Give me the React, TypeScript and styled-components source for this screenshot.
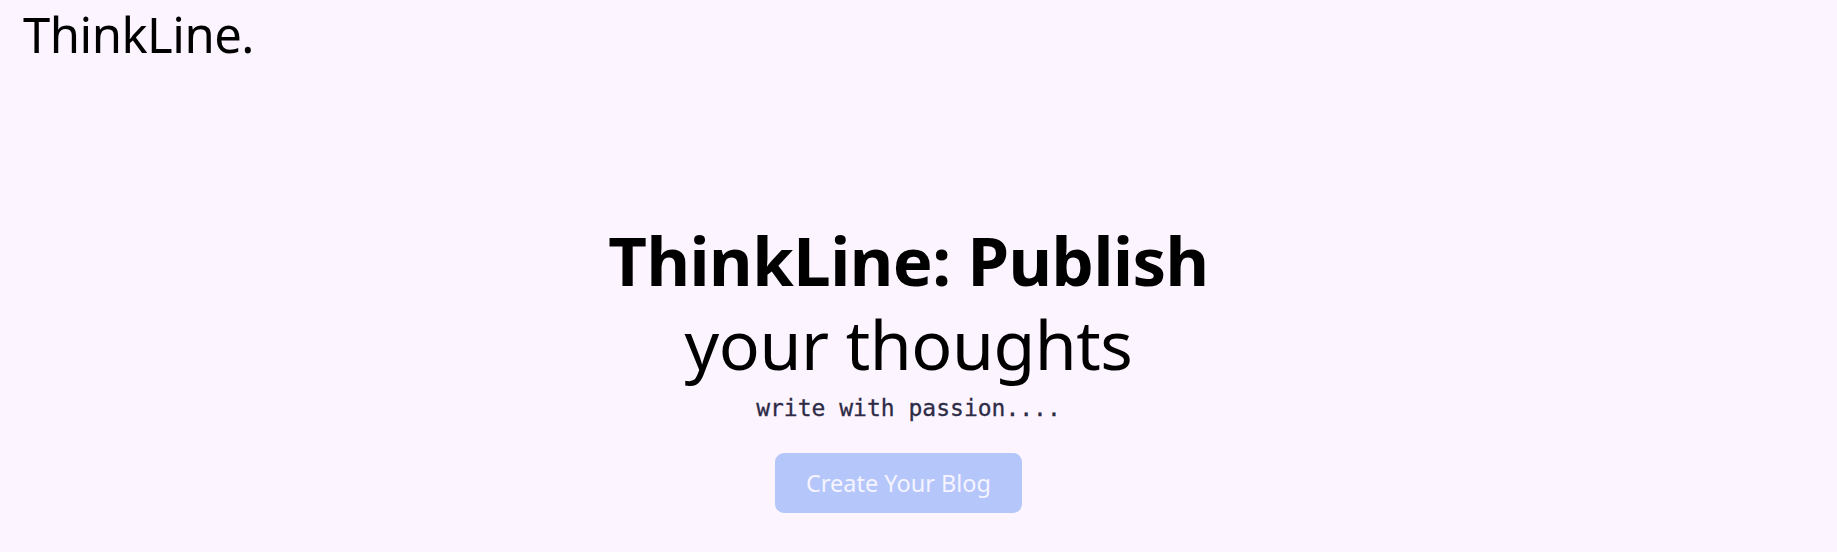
import React from "react";
import styled, { createGlobalStyle } from "styled-components";

const Global = createGlobalStyle`
  html, body { margin: 0; padding: 0; background: #fcf4ff; }
  body { font-family: "Noto Sans", "Open Sans", sans-serif; color: #000; }
`;

const Page = styled.div`
  width: 100%;
  height: 552px;
  display: flex;
  flex-direction: column;
  background: #fcf4ff;
  overflow: hidden;
`;

const Header = styled.header`
  display: flex;
  align-items: center;
  padding: 0 23px;
  height: 70px;
`;

const Logo = styled.div`
  font-size: 49px;
  line-height: 1;
  letter-spacing: -0.5px;
  margin-top: -2px;
`;

const Hero = styled.main`
  display: flex;
  flex-direction: column;
  align-items: center;
  padding-top: 146px;
  padding-right: 20px;
`;

const Title = styled.h1`
  margin: 0;
  font-size: 67px;
  font-weight: 700;
  line-height: 88px;
  letter-spacing: -0.5px;
`;

const Subtitle = styled.div`
  font-size: 68px;
  font-weight: 400;
  line-height: 88px;
  letter-spacing: -0.5px;
  margin-top: -4px;
`;

const Tagline = styled.p`
  margin: 5px 0 0;
  font-family: "DejaVu Sans Mono", "Liberation Mono", monospace;
  font-size: 23px;
  line-height: 30px;
  color: #2d2b45;
  -webkit-text-stroke: 0.3px #2d2b45;
`;

const Button = styled.button`
  margin-top: 30px;
  margin-right: 20px;
  width: 247px;
  height: 60px;
  border: none;
  border-radius: 9px;
  background: #b5c6fb;
  color: #f6f4ff;
  font-family: "Noto Sans", "Open Sans", sans-serif;
  font-size: 23.5px;
  cursor: pointer;
`;

export default function App() {
  return (
    <Page>
      <Global />
      <Header>
        <Logo>ThinkLine.</Logo>
      </Header>
      <Hero>
        <Title>ThinkLine: Publish</Title>
        <Subtitle>your thoughts</Subtitle>
        <Tagline>write with passion....</Tagline>
        <Button>Create Your Blog</Button>
      </Hero>
    </Page>
  );
}
